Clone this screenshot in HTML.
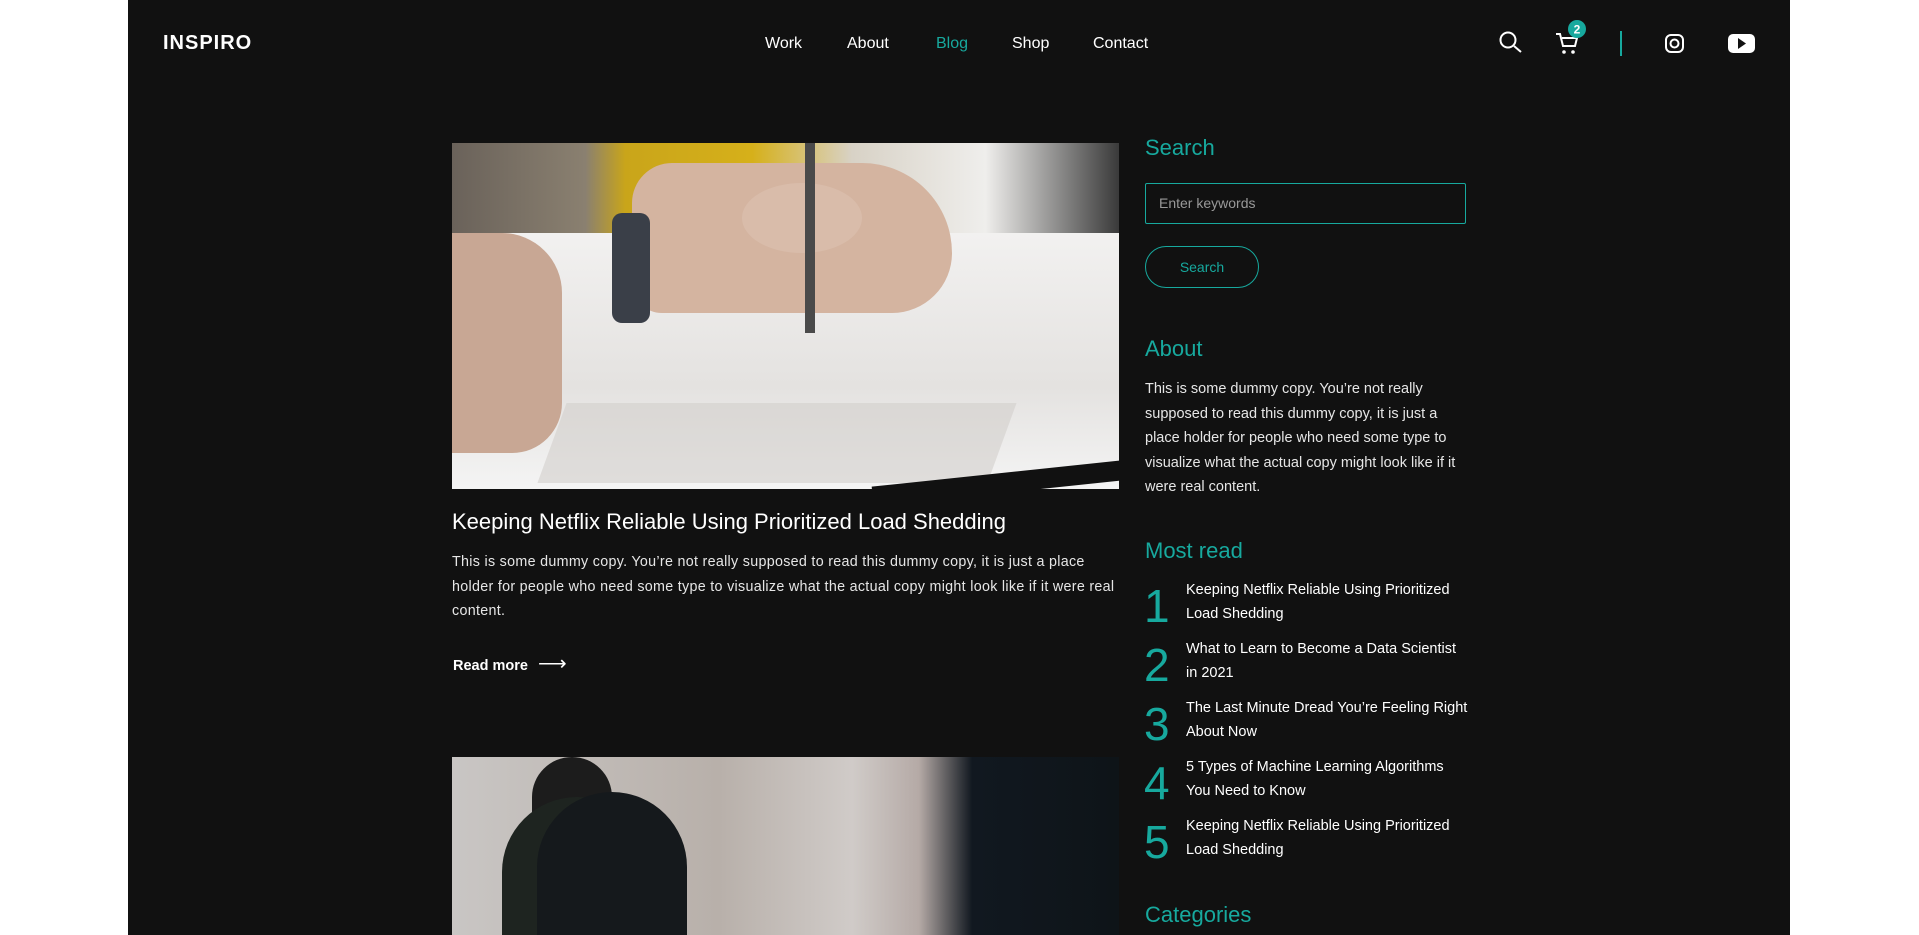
<!DOCTYPE html>
<html><head><meta charset="utf-8"><style>
*{margin:0;padding:0;box-sizing:border-box}
body{width:1919px;height:935px;background:#fff;overflow:hidden;font-family:"Liberation Sans",sans-serif;position:relative}
.wrap{position:absolute;left:128px;top:0;width:1662px;height:935px;background:#111}
.a{position:absolute;white-space:nowrap}
.nav{top:35px;font-size:16px;color:#fff}
.p{color:#e6e6e6;font-size:14.5px;line-height:24.5px;white-space:normal}
.h{font-size:22px;color:#17a99e}
.num{font-size:46px;color:#17a99e;line-height:46px}
.mt{font-size:14.5px;line-height:24px;color:#fff;white-space:normal;width:285px}
</style></head><body>
<div class="wrap"></div>
<div class="a" style="left:163px;top:32px;font-size:20px;font-weight:bold;color:#fff;letter-spacing:1px">INSPIRO</div>
<div class="a nav" style="left:765px">Work</div>
<div class="a nav" style="left:847px">About</div>
<div class="a nav" style="left:936px;color:#17a99e">Blog</div>
<div class="a nav" style="left:1012px">Shop</div>
<div class="a nav" style="left:1093px">Contact</div>
<svg class="a" style="left:1495px;top:18px" width="290" height="42" viewBox="1495 18 290 42">
<circle cx="1508" cy="40" r="7.5" fill="none" stroke="#fff" stroke-width="2"/><line x1="1514" y1="46" x2="1521" y2="52" stroke="#fff" stroke-width="2"/>
<path d="M1556 34h4l3 12h12l2-8h-15" fill="none" stroke="#fff" stroke-width="2"/><circle cx="1564" cy="52" r="1.8" fill="#fff"/><circle cx="1573" cy="52" r="1.8" fill="#fff"/>
<circle cx="1577" cy="29" r="9" fill="#17a99e"/><text x="1577" y="33.5" font-size="12" font-weight="bold" fill="#fff" text-anchor="middle" font-family="Liberation Sans">2</text>
<line x1="1621" y1="31" x2="1621" y2="56" stroke="#17a99e" stroke-width="2"/>
<rect x="1666" y="35" width="17" height="17" rx="5" fill="none" stroke="#fff" stroke-width="2"/><circle cx="1674.5" cy="43.5" r="4" fill="none" stroke="#fff" stroke-width="2"/>
<rect x="1728" y="34" width="27" height="19" rx="5" fill="#fff"/><path d="M1738 38v11l8-5.5z" fill="#111"/>
</svg>
<!-- image 1 -->
<div class="a" style="left:452px;top:143px;width:667px;height:346px;overflow:hidden;background:#ebeae8">
<div class="a" style="left:0;top:0;width:667px;height:90px;background:linear-gradient(90deg,#6a625a 0,#8a8070 20%,#c9a51a 26%,#d6b01a 45%,#d8d2c6 60%,#efeeec 80%,#3a3a3a 100%)"></div>
<div class="a" style="left:0;top:90px;width:667px;height:256px;background:linear-gradient(180deg,#f2f1f0,#e4e2e0 60%,#f4f4f4)"></div>
<div class="a" style="left:100px;top:260px;width:450px;height:80px;background:#d2cfcc;transform:skewX(-20deg);opacity:.6"></div>
<div class="a" style="left:0;top:90px;width:110px;height:220px;background:#c8a794;border-radius:0 60px 50px 0"></div>
<div class="a" style="left:180px;top:20px;width:320px;height:150px;background:#d4b4a0;border-radius:40px 90px 60px 30px"></div>
<div class="a" style="left:290px;top:40px;width:120px;height:70px;background:#d9bcaa;border-radius:50%"></div>
<div class="a" style="left:160px;top:70px;width:38px;height:110px;background:#3a3f48;border-radius:10px"></div>
<div class="a" style="left:353px;top:0;width:10px;height:190px;background:#4a4a4a"></div>
<div class="a" style="left:420px;top:330px;width:260px;height:20px;background:#111;transform:rotate(-6deg)"></div>
</div>
<div class="a" style="left:452px;top:509px;font-size:22px;color:#fff">Keeping Netflix Reliable Using Prioritized Load Shedding</div>
<div class="a p" style="left:452px;top:550px;width:667px;font-size:14.3px;letter-spacing:.3px">This is some dummy copy. You’re not really supposed to read this dummy copy, it is just a place holder for people who need some type to visualize what the actual copy might look like if it were real content.</div>
<div class="a" style="left:453px;top:651px;font-size:14.5px;font-weight:bold;color:#fff">Read more <span style="font-weight:normal;font-size:20px;margin-left:6px">⟶</span></div>
<!-- image 2 -->
<div class="a" style="left:452px;top:757px;width:667px;height:178px;overflow:hidden;background:linear-gradient(90deg,#c9c6c4 0,#b8b0aa 40%,#d0cbc8 60%,#b5aaa6 70%,#111820 78%,#0e1418 100%)">
<div class="a" style="left:80px;top:0;width:80px;height:60px;background:#1c1c1c;border-radius:40px 40px 0 0"></div>
<div class="a" style="left:50px;top:40px;width:150px;height:150px;background:#1e2420;border-radius:50% 50% 0 0"></div>
<div class="a" style="left:85px;top:35px;width:150px;height:150px;background:#15191c;border-radius:60% 60% 0 0"></div>
</div>
<!-- sidebar -->
<div class="a h" style="left:1145px;top:135px">Search</div>
<div class="a" style="left:1145px;top:183px;width:321px;height:41px;border:1px solid #17a99e;border-radius:2px;color:#999;font-size:14px;padding:11px 0 0 13px">Enter keywords</div>
<div class="a" style="left:1145px;top:246px;width:114px;height:42px;border:1px solid #17a99e;border-radius:21px;color:#17a99e;font-size:14px;text-align:center;line-height:40px">Search</div>
<div class="a h" style="left:1145px;top:336px">About</div>
<div class="a p" style="left:1145px;top:377px;width:330px">This is some dummy copy. You’re not really supposed to read this dummy copy, it is just a place holder for people who need some type to visualize what the actual copy might look like if it were real content.</div>
<div class="a h" style="left:1145px;top:538px">Most read</div>
<div class="a num" style="left:1144px;top:583px">1</div><div class="a mt" style="left:1186px;top:578px">Keeping Netflix Reliable Using Prioritized Load Shedding</div>
<div class="a num" style="left:1144px;top:642px">2</div><div class="a mt" style="left:1186px;top:637px">What to Learn to Become a Data Scientist in 2021</div>
<div class="a num" style="left:1144px;top:701px">3</div><div class="a mt" style="left:1186px;top:696px">The Last Minute Dread You’re Feeling Right About Now</div>
<div class="a num" style="left:1144px;top:760px">4</div><div class="a mt" style="left:1186px;top:755px">5 Types of Machine Learning Algorithms You Need to Know</div>
<div class="a num" style="left:1144px;top:819px">5</div><div class="a mt" style="left:1186px;top:814px">Keeping Netflix Reliable Using Prioritized Load Shedding</div>
<div class="a h" style="left:1145px;top:902px">Categories</div>
</body></html>
